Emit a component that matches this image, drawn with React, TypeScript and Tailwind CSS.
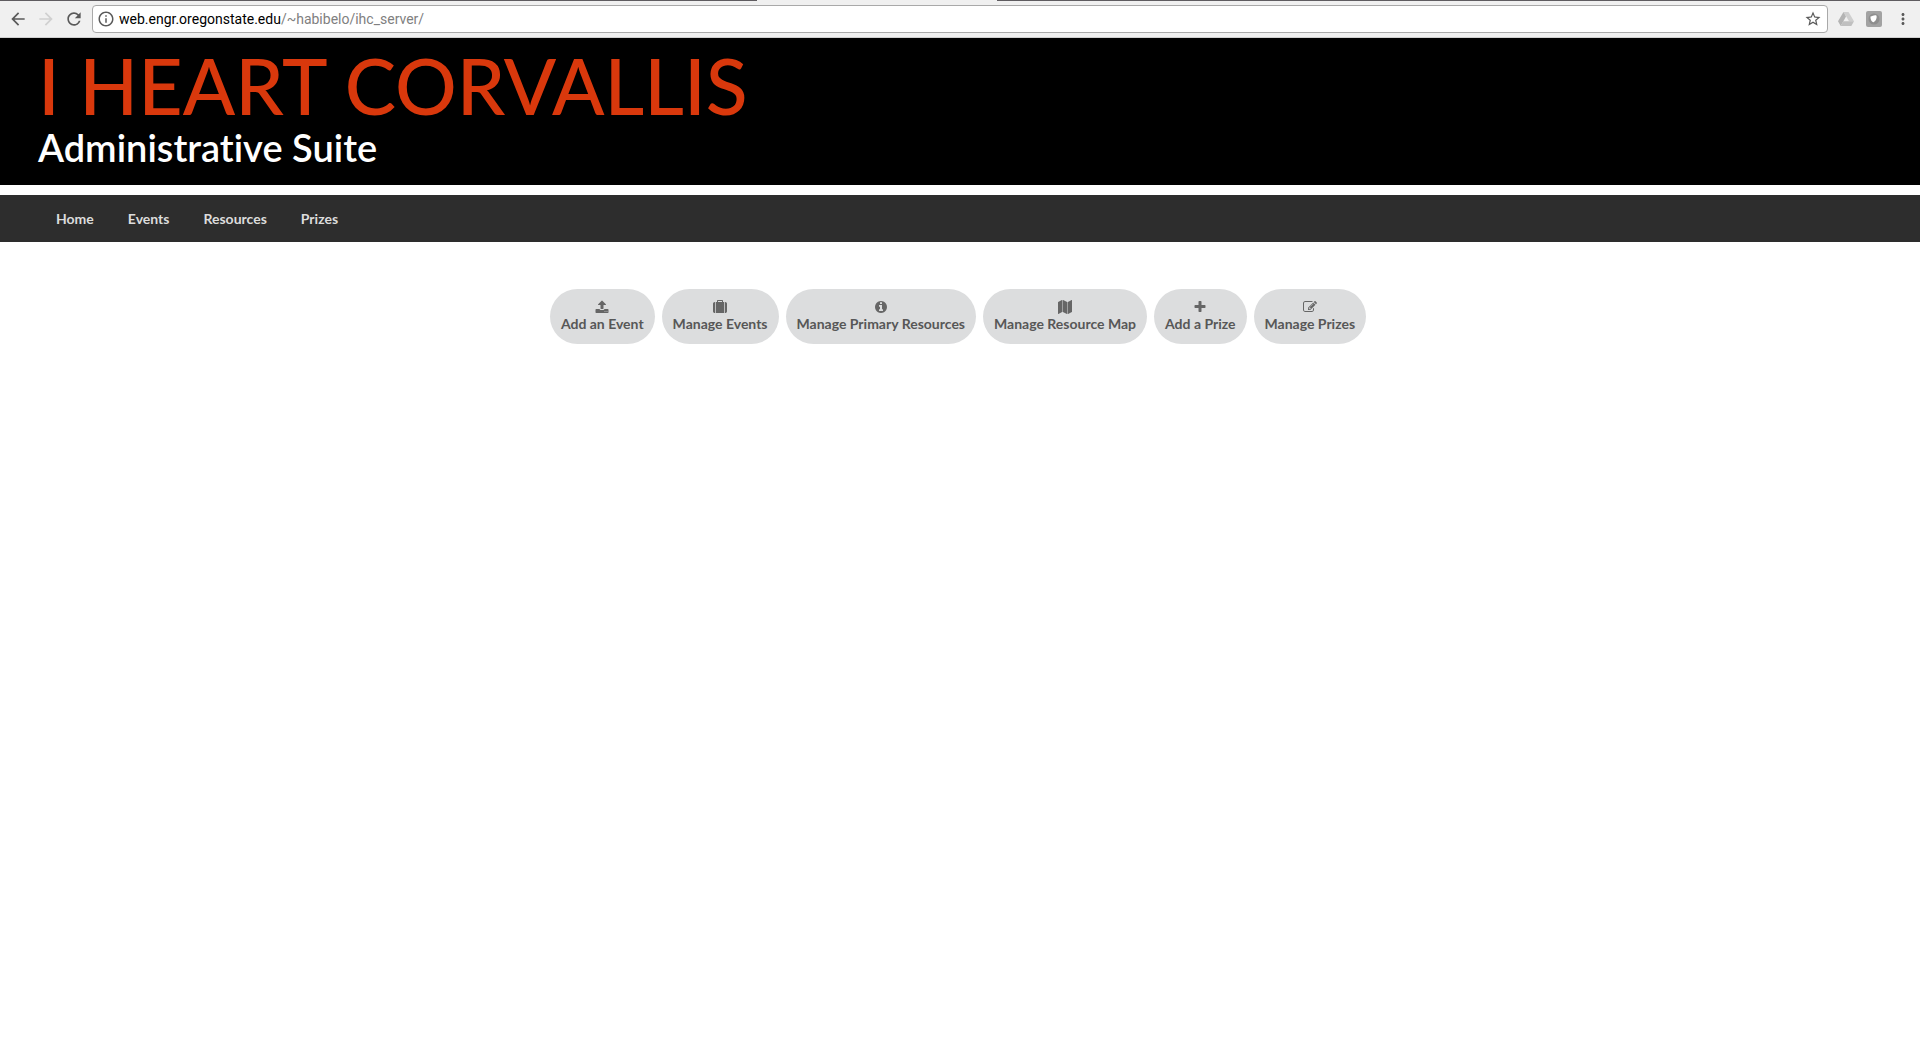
import React from "react";
import { MdArrowBack, MdArrowForward, MdRefresh, MdStarBorder, MdInfoOutline, MdMoreVert } from "react-icons/md";

const navLinks = ["Home", "Events", "Resources", "Prizes"];

const actions = [
  {
    label: "Add an Event",
    path: "M1344 1472q0-26-19-45t-45-19-45 19-19 45 19 45 45 19 45-19 19-45zm256 0q0-26-19-45t-45-19-45 19-19 45 19 45 45 19 45-19 19-45zm128-224v320q0 40-28 68t-68 28h-1472q-40 0-68-28t-28-68v-320q0-40 28-68t68-28h427q21 56 70.5 92t110.5 36h256q61 0 110.5-36t70.5-92h427q40 0 68 28t28 68zm-325-648q-17 40-59 40h-256v448q0 26-19 45t-45 19h-256q-26 0-45-19t-19-45v-448h-256q-42 0-59-40-17-39 14-69l448-448q18-19 45-19t45 19l448 448q31 30 14 69z",
  },
  {
    label: "Manage Events",
    path: "M640 256h512v-128h-512v128zm-352 0v1408h-64q-92 0-158-66t-66-158v-960q0-92 66-158t158-66h64zm1120 0v1408h-1024v-1408h128v-160q0-40 28-68t68-28h576q40 0 68 28t28 68v160h128zm384 224v960q0 92-66 158t-158 66h-64v-1408h64q92 0 158 66t66 158z",
  },
  {
    label: "Manage Primary Resources",
    path: "M1152 1376v-160q0-14-9-23t-23-9h-96v-512q0-14-9-23t-23-9h-320q-14 0-23 9t-9 23v160q0 14 9 23t23 9h96v320h-96q-14 0-23 9t-9 23v160q0 14 9 23t23 9h448q14 0 23-9t9-23zm-128-896v-160q0-14-9-23t-23-9h-192q-14 0-23 9t-9 23v160q0 14 9 23t23 9h192q14 0 23-9t9-23zm640 416q0 209-103 385.5t-279.5 279.5-385.5 103-385.5-103-279.5-279.5-103-385.5 103-385.5 279.5-279.5 385.5-103 385.5 103 279.5 279.5 103 385.5z",
  },
  {
    label: "Manage Resource Map",
    path: "M512 0q13 0 22.5 9.5t9.5 22.5v1472q0 20-17 28l-480 256q-7 4-15 4-13 0-22.5-9.5t-9.5-22.5v-1472q0-20 17-28l480-256q7-4 15-4zm1248 0q13 0 22.5 9.5t9.5 22.5v1472q0 20-17 28l-480 256q-7 4-15 4-13 0-22.5-9.5t-9.5-22.5v-1472q0-20 17-28l480-256q7-4 15-4zm-1120 0q8 0 14 3l512 256q18 10 18 29v1472q0 13-9.5 22.5t-22.5 9.5q-8 0-14-3l-512-256q-18-10-18-29v-1472q0-13 9.5-22.5t22.5-9.5z",
  },
  {
    label: "Add a Prize",
    path: "M1600 736v192q0 40-28 68t-68 28h-416v416q0 40-28 68t-68 28h-192q-40 0-68-28t-28-68v-416h-416q-40 0-68-28t-28-68v-192q0-40 28-68t68-28h416v-416q0-40 28-68t68-28h192q40 0 68 28t28 68v416h416q40 0 68 28t28 68z",
  },
  {
    label: "Manage Prizes",
    path: "M888 1184l116-116-152-152-116 116v56h96v96h56zm440-720q-16-16-33 1l-350 350q-17 17-1 33t33-1l350-350q17-17 1-33zm80 594v190q0 119-84.5 203.5t-203.5 84.5h-832q-119 0-203.5-84.5t-84.5-203.5v-832q0-119 84.5-203.5t203.5-84.5h832q63 0 117 25 15 7 18 23 3 17-9 29l-49 49q-14 14-32 8-23-6-45-6h-832q-66 0-113 47t-47 113v832q0 66 47 113t113 47h832q66 0 113-47t47-113v-126q0-13 9-22l64-64q15-15 35-7t20 29zm-96-738l288 288-672 672h-288v-288zm444 132l-92 92-288-288 92-92q28-28 68-28t68 28l152 152q28 28 28 68t-28 68z",
  },
];

function BrowserBar() {
  return (
    <div className="bg-[#f0f0f0] border-b border-[#d0d0d0]">
      <div className="flex h-px gap-60">
        <div className="flex-[82] bg-[#5f5c60]" />
        <div className="flex-[100] bg-[#5f5c60]" />
      </div>
      <div className="flex h-9 items-center px-2 text-[#5a5a5a]">
        <button aria-label="Back" className="mr-2 flex size-5 items-center justify-center">
          <MdArrowBack className="size-5" />
        </button>
        <button aria-label="Forward" className="mr-2 flex size-5 items-center justify-center text-[#d0d0d0]">
          <MdArrowForward className="size-5" />
        </button>
        <button aria-label="Reload" className="mr-2 flex size-5 items-center justify-center">
          <MdRefresh className="size-5" />
        </button>
        <div className="flex h-7 flex-1 items-center rounded-sm border border-[#a9a9a9] bg-white pr-[5px] pl-1">
          <MdInfoOutline className="mr-1 size-[18px]" />
          <a href="#" className="flex-1 font-[Roboto,sans-serif] text-sm leading-5 text-[#808080]">
            <span className="text-black">web.engr.oregonstate.edu</span>/~habibelo/ihc_server/
          </a>
          <button aria-label="Bookmark">
            <MdStarBorder className="size-[18px]" />
          </button>
        </div>
        <button aria-label="Drive" className="ml-2.5">
          <svg viewBox="0 0 16 14" className="h-3.5 w-4">
            <path d="M5.5 0h5L16 9.300h-5z" fill="#cfcfcf" />
            <path d="M5.500 0 0 9.300 2.700 14 8 4.500z" fill="#b4b4b4" />
            <path d="M5.300 9.300H16L13.300 14H2.700z" fill="#c0c0c0" />
          </svg>
        </button>
        <button aria-label="Extension" className="ml-3">
          <svg viewBox="0 0 16 16" className="size-4">
            <rect width="16" height="16" rx="2" fill="#a2a2a2" />
            <circle cx="8" cy="8" r="5.500" fill="#8e8e8e" />
            <path d="M4.500 5.500C6.500 5 8 3.800 10 4.300 11.500 5 10.500 10 7.500 11.300 5.500 11 4.300 8 4.500 5.500z" fill="#fff" />
          </svg>
        </button>
        <button aria-label="Menu" className="ml-3">
          <MdMoreVert className="size-[18px]" />
        </button>
      </div>
    </div>
  );
}

export default function App() {
  return (
    <div className="min-h-screen bg-white font-[Lato,sans-serif]">
      <BrowserBar />
      <header className="bg-black px-[38px] pt-[5px] pb-[18px]">
        <h1 className="text-[77px] leading-[84px] font-medium text-[#d9380c]">I HEART CORVALLIS</h1>
        <p className="text-[38px] leading-10 font-semibold text-white [font-variant-ligatures:none]">Administrative Suite</p>
      </header>
      <nav className="mt-2.5 flex bg-[#2d2d2d] px-[39px]">
        {navLinks.map((link) => (
          <a key={link} href="#" className="px-[17px] text-sm leading-[47px] font-bold text-[#dcdcdc]">
            {link}
          </a>
        ))}
      </nav>
      <main className="mt-[47px] flex flex-wrap justify-center gap-[7px] pr-1">
        {actions.map((action) => (
          <button
            key={action.label}
            className="flex h-[55px] flex-col items-center rounded-full bg-[#dcddde] px-[11px] pt-[11px] text-sm leading-[17px] font-bold text-[#575757]"
          >
            <svg viewBox="0 0 1792 1792" className="mb-px size-3.5 text-[#666666]" fill="currentColor" aria-hidden="true">
              <path d={action.path} />
            </svg>
            {action.label}
          </button>
        ))}
      </main>
    </div>
  );
}
